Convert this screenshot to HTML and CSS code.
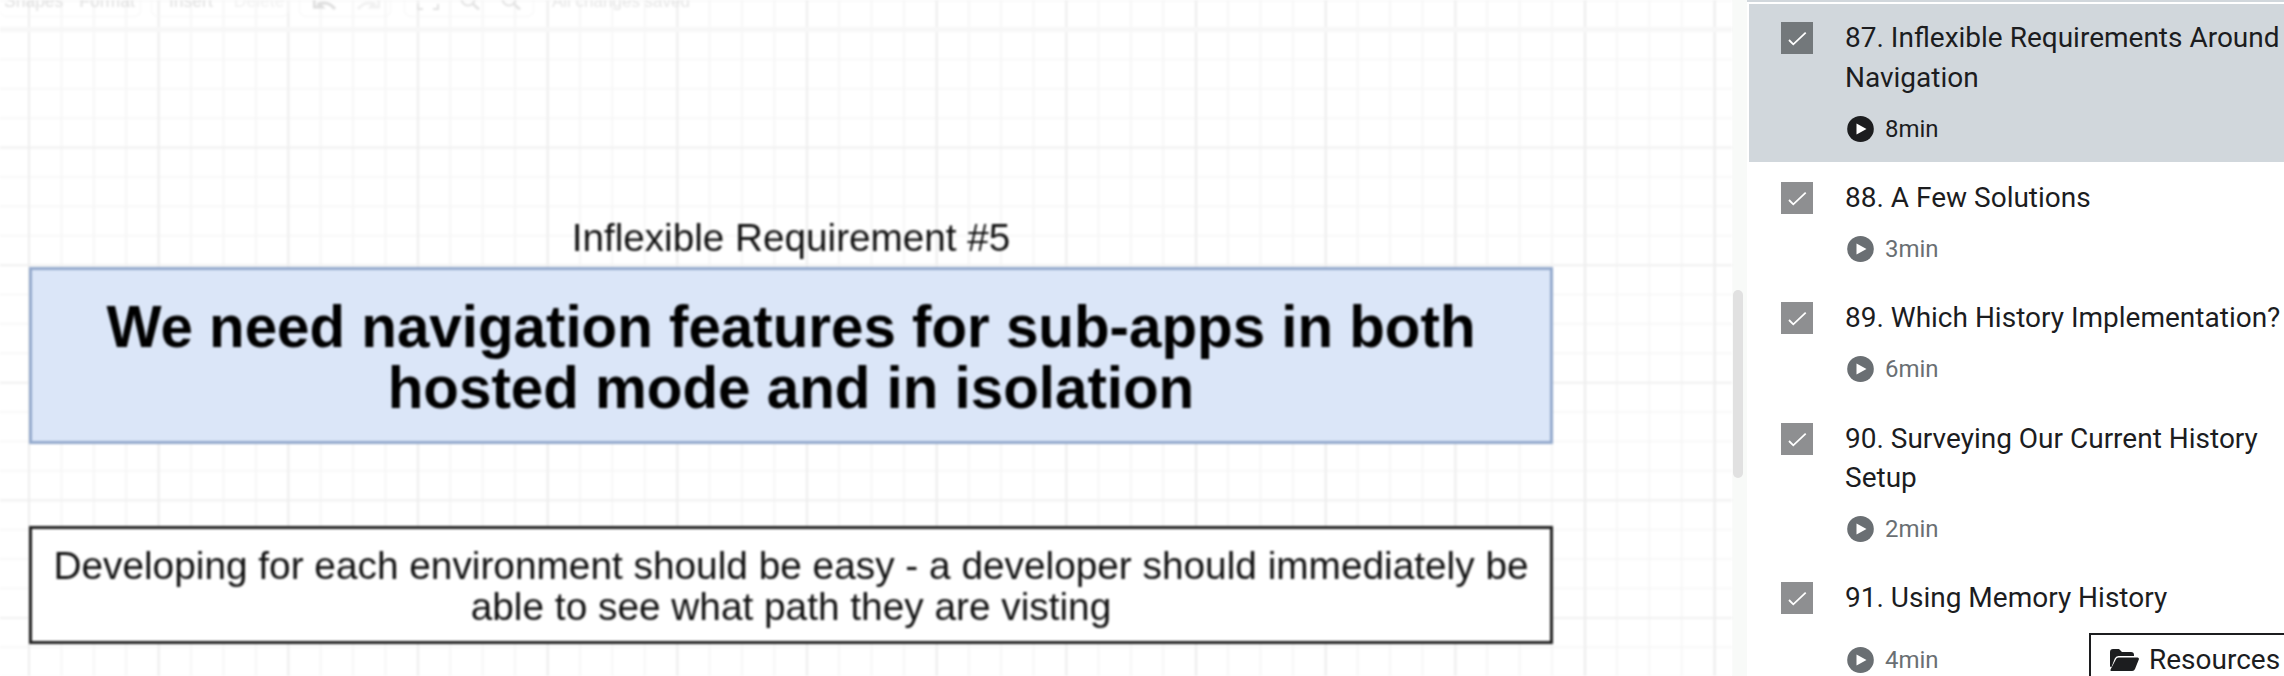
FILE: index.html
```html
<!DOCTYPE html>
<html lang="en">
<head>
<meta charset="utf-8">
<title>Inflexible Requirements Around Navigation</title>
<link rel="stylesheet" href="styles.css">
</head>
<body>
<div class="page">
  <main class="canvas">
    <div class="toolbar">
      <div class="tool-group group-menu"><span>Shapes</span><span>Format</span></div>
      <div class="tool-group group-edit"><span>Insert</span><span class="disabled">Delete</span></div>
      <div class="tool-group group-history">
        <svg class="tool-icon" width="24" height="10" viewBox="0 0 24 10"><path d="M1 0v7h8L6 4c5-2 11-1 16 5" fill="none" stroke="#dedede" stroke-width="3"/></svg>
        <svg class="tool-icon faint" width="25" height="10" viewBox="0 0 25 10"><path d="M24 0v7h-8l3-3C14 2 8 3 3 9" fill="none" stroke="#f0f0f0" stroke-width="3"/></svg>
      </div>
      <div class="tool-group group-zoom">
        <svg class="tool-icon" width="22" height="11" viewBox="0 0 22 11"><path d="M1 5v5h5M16 10h5V5" fill="none" stroke="#e2e2e2" stroke-width="2"/></svg>
        <svg class="tool-icon" width="20" height="11" viewBox="0 0 20 11"><circle cx="8" cy="0" r="6.500" fill="none" stroke="#e2e2e2" stroke-width="2"/><path d="M13 5l6 5.500" stroke="#e2e2e2" stroke-width="2.500"/></svg>
        <svg class="tool-icon" width="20" height="11" viewBox="0 0 20 11"><circle cx="8" cy="0" r="6.500" fill="none" stroke="#e2e2e2" stroke-width="2"/><path d="M13 5l6 5.500" stroke="#e2e2e2" stroke-width="2.500"/></svg>
      </div>
      <span class="saved">All changes saved</span>
    </div>
    <div class="toolbar-rule"></div>
    <section class="diagram">
      <h2 class="diagram-title">Inflexible Requirement #5</h2>
      <div class="box box-blue">We need navigation features for sub-apps in both<br>hosted mode and in isolation</div>
      <div class="box box-plain">Developing for each environment should be easy - a developer should immediately be<br>able to see what path they are visting</div>
    </section>
  </main>

  <div class="gutter"><div class="scroll-thumb"></div></div>

  <aside class="sidebar">
    <div class="top-strip"></div>
    <ul class="lessons">
      <li class="lesson current">
        <span class="check"><svg width="32" height="32" viewBox="0 0 32 32"><path d="M8 18l4.300 4.300L24.700 10.700" fill="none" stroke="#fff" stroke-width="1.800"/></svg></span>
        <div class="lesson-body">
          <div class="lesson-title">87. Inflexible Requirements Around Navigation</div>
          <div class="meta"><span class="duration"><svg class="play" width="27" height="26" viewBox="0 0 27 26"><ellipse cx="13.500" cy="13" rx="13.300" ry="13"/><path class="play-arrow" d="M9.500 7.500l10 5.500-10 5.500z"/></svg>8min</span></div>
        </div>
      </li>
      <li class="lesson">
        <span class="check"><svg width="32" height="32" viewBox="0 0 32 32"><path d="M8 18l4.300 4.300L24.700 10.700" fill="none" stroke="#fff" stroke-width="1.800"/></svg></span>
        <div class="lesson-body">
          <div class="lesson-title">88. A Few Solutions</div>
          <div class="meta"><span class="duration"><svg class="play" width="27" height="26" viewBox="0 0 27 26"><ellipse cx="13.500" cy="13" rx="13.300" ry="13"/><path class="play-arrow" d="M9.500 7.500l10 5.500-10 5.500z"/></svg>3min</span></div>
        </div>
      </li>
      <li class="lesson">
        <span class="check"><svg width="32" height="32" viewBox="0 0 32 32"><path d="M8 18l4.300 4.300L24.700 10.700" fill="none" stroke="#fff" stroke-width="1.800"/></svg></span>
        <div class="lesson-body">
          <div class="lesson-title">89. Which History Implementation?</div>
          <div class="meta"><span class="duration"><svg class="play" width="27" height="26" viewBox="0 0 27 26"><ellipse cx="13.500" cy="13" rx="13.300" ry="13"/><path class="play-arrow" d="M9.500 7.500l10 5.500-10 5.500z"/></svg>6min</span></div>
        </div>
      </li>
      <li class="lesson">
        <span class="check"><svg width="32" height="32" viewBox="0 0 32 32"><path d="M8 18l4.300 4.300L24.700 10.700" fill="none" stroke="#fff" stroke-width="1.800"/></svg></span>
        <div class="lesson-body">
          <div class="lesson-title">90. Surveying Our Current History Setup</div>
          <div class="meta"><span class="duration"><svg class="play" width="27" height="26" viewBox="0 0 27 26"><ellipse cx="13.500" cy="13" rx="13.300" ry="13"/><path class="play-arrow" d="M9.500 7.500l10 5.500-10 5.500z"/></svg>2min</span></div>
        </div>
      </li>
      <li class="lesson">
        <span class="check"><svg width="32" height="32" viewBox="0 0 32 32"><path d="M8 18l4.300 4.300L24.700 10.700" fill="none" stroke="#fff" stroke-width="1.800"/></svg></span>
        <div class="lesson-body">
          <div class="lesson-title">91. Using Memory History</div>
          <div class="meta meta-with-button">
            <span class="duration"><svg class="play" width="27" height="26" viewBox="0 0 27 26"><ellipse cx="13.500" cy="13" rx="13.300" ry="13"/><path class="play-arrow" d="M9.500 7.500l10 5.500-10 5.500z"/></svg>4min</span>
            <button class="resources" type="button">
              <svg width="29" height="22" viewBox="0 0 29 22"><path d="M0 3a3 3 0 0 1 3-3h6l3 3h9a3 3 0 0 1 3 3v1H8.500a4 4 0 0 0-3.700 2.500L1.500 18H1a1 1 0 0 1-1-1z" fill="#1c1d1f"/><path d="M8.500 8.500H27.500a1.400 1.400 0 0 1 1.300 2L25 20a3 3 0 0 1-2.800 2H1.800a1.200 1.200 0 0 1-1.100-1.700L5.800 10.500a3 3 0 0 1 2.700-2z" fill="#1c1d1f"/></svg>
              <span>Resources</span>
            </button>
          </div>
        </div>
      </li>
    </ul>
  </aside>
</div>
</body>
</html>
```
FILE: styles.css
```css
* { box-sizing: border-box; }
html, body { margin: 0; padding: 0; height: 100%; overflow: hidden; background: #fff; }

.page {
  display: flex;
  width: 2284px;
  height: 676px;
  overflow: hidden;
}

/* Blurry captured diagram area */
.canvas {
  flex: 0 0 1732px;
  height: 676px;
  overflow: hidden;
  filter: blur(0.8px);
  background-color: #fff;
  background-image:
    linear-gradient(90deg, #eeeeee 2px, transparent 2px),
    linear-gradient(180deg, #f1f1f1 2px, transparent 2px),
    linear-gradient(90deg, #f6f6f6 1.5px, transparent 1.5px),
    linear-gradient(180deg, #f8f8f8 1.5px, transparent 1.5px);
  background-size: 129.7px 100%, 100% 117.6px, 32.42px 100%, 100% 29.4px;
  background-position: 28px 0, 0 29px, 28px 0, 0 29px;
  font-family: "Liberation Sans", Arial, sans-serif;
  color: #000;
}

.toolbar {
  display: flex;
  align-items: flex-end;
  gap: 10px;
  height: 17px;
  overflow: hidden;
  font-size: 17.500px;
  line-height: 20px;
  color: #e0e0e0;
}
.tool-group {
  flex: none;
  display: flex;
  align-items: flex-end;
  height: 17px;
  padding-bottom: 9px;
  border: 1px solid #f6f6f6;
  border-top: 0;
  border-radius: 0 0 7px 7px;
}
.tool-group span { flex: none; margin-bottom: -4px; }
.tool-icon { flex: none; margin-bottom: -3px; }
.group-menu { width: 141px; padding-left: 4px; gap: 16px; border-left: 0; }
.group-edit { width: 138px; padding-left: 17px; gap: 21px; }
.group-history { width: 92px; padding-left: 13px; gap: 18px; }
.group-zoom { width: 130px; padding-left: 12px; gap: 21px; margin-left: 3px; }
.disabled { color: #f1f1f1; }
.faint { opacity: 0.9; }
.saved { flex: none; margin-left: 8px; margin-bottom: 5px; font-size: 17px; color: #e6e6e6; }

.toolbar-rule {
  height: 5px;
  margin-top: 10px;
  background: #f7f7f7;
}

.diagram { padding: 186px 0 0 29px; }
.diagram-title {
  margin: 0 0 9px;
  width: 1524px;
  font-size: 38.700px;
  line-height: 40px;
  font-weight: 400;
  text-align: center;
  color: #111;
}
.box {
  display: flex;
  align-items: center;
  justify-content: center;
  width: 1524px;
  padding-top: 2px;
  text-align: center;
}
.box-blue {
  height: 177px;
  margin-bottom: 82px;
  border: 3px solid #93a9cc;
  background: #dbe6f8;
  font-size: 58.300px;
  line-height: 61px;
  font-weight: 700;
}
.box-plain {
  height: 118px;
  border: 3px solid #1f1f1f;
  background: #fff;
  font-size: 38.800px;
  line-height: 41px;
  color: #111;
}

.gutter {
  flex: 0 0 15px;
  height: 676px;
  padding-top: 290px;
  background: #f8faf8;
}
.scroll-thumb {
  width: 10px;
  height: 188px;
  margin-left: 1px;
  border-radius: 5px;
  background: #e1e1e1;
  filter: blur(0.6px);
}

.sidebar {
  flex: 1 1 auto;
  min-width: 0;
  font-family: Roboto, "Liberation Sans", Arial, sans-serif;
  color: #1c1d1f;
  background: #fff;
}
.top-strip { height: 2px; background: #d1d7dc; }
.lessons { list-style: none; margin: 0 0 0 2px; padding: 0; }
.lesson {
  display: flex;
  gap: 32px;
  padding: 20px 0 20.300px 32px;
  color: #1c1d1f;
}
.lesson.current {
  padding-top: 18px;
  padding-bottom: 20.500px;
  border-top: 2px solid #fff;
  background: #d1d7dc;
}
.check {
  flex: none;
  width: 32px;
  height: 32px;
  background: #8e8f91;
}
.current .check { background: #73787b; }
.check svg { display: block; }
.lesson-body { flex: 1 1 auto; min-width: 0; }
.lesson-title { margin-top: -4px; font-size: 28px; line-height: 39.500px; }
.meta {
  display: flex;
  align-items: center;
  margin-top: 18.500px;
}
.duration {
  display: inline-flex;
  align-items: center;
  gap: 11px;
  padding-left: 2px;
  font-size: 24px;
  line-height: 26px;
  color: #6a6f73;
}
.current .duration { color: #1c1d1f; }
.play { flex: none; fill: #6a6f73; }
.current .play { fill: #1c1d1f; }
.play-arrow { fill: #fff; }

.meta-with-button { margin-top: 15px; }
.resources {
  display: flex;
  align-items: center;
  gap: 10px;
  flex: none;
  width: 225px;
  height: 54px;
  margin-left: auto;
  margin-right: -30px;
  padding: 0 0 0 19px;
  border: 2px solid #1c1d1f;
  background: #fff;
  font: inherit;
  font-size: 28px;
  color: #1c1d1f;
}
```
